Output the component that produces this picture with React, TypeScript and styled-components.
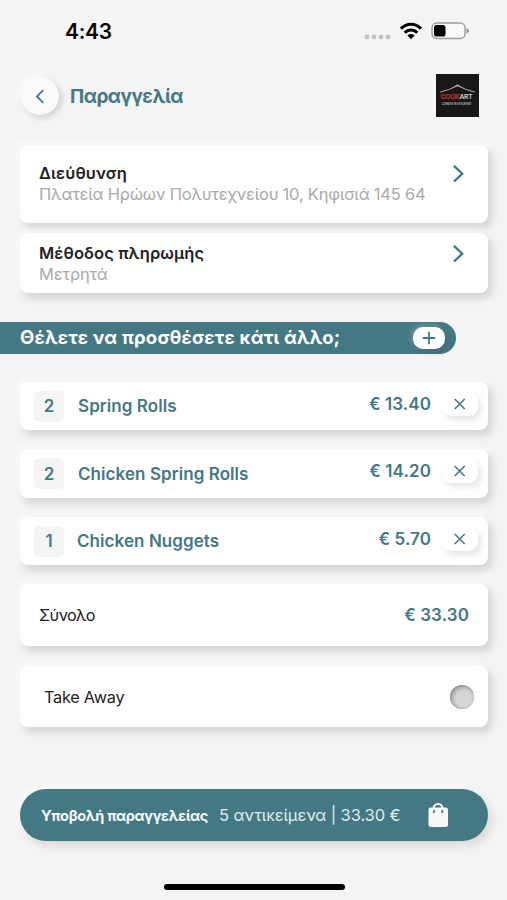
import React from 'react';
import styled, { createGlobalStyle } from 'styled-components';

const TEAL = '#447883';

const GlobalStyle = createGlobalStyle`
  * { box-sizing: border-box; }
  body { margin: 0; background: #f4f4f4; }
  button { border: 0; padding: 0; font: inherit; color: inherit; }
`;

const Screen = styled.div`
  width: 507px;
  height: 900px;
  display: flex;
  flex-direction: column;
  overflow: hidden;
  background: #f4f4f4;
  color: #222;
  font-family: Inter, 'Noto Sans', sans-serif;
  white-space: nowrap;
`;

const StatusBar = styled.div`
  height: 62px;
  display: flex;
  justify-content: space-between;
  align-items: center;
  padding: 0 38px 0 65px;
`;

const Clock = styled.div`
  padding-top: 1px;
  font-size: 21px;
  font-weight: 600;
  letter-spacing: -0.3px;
  color: #050505;
`;

const StatusIcons = styled.div`
  display: flex;
  align-items: center;
  gap: 9px;
`;

const Header = styled.header`
  height: 68px;
  margin-bottom: 15px;
  flex: none;
  display: flex;
  align-items: center;
  padding: 0 28px 0 21px;
`;

const BackButton = styled.button`
  width: 38px;
  height: 38px;
  border-radius: 50%;
  display: grid;
  place-items: center;
  background: #fbfbfb;
  box-shadow: 3px 3px 6px rgba(0, 0, 0, 0.14), -3px -3px 6px rgba(255, 255, 255, 0.7);
`;

const Title = styled.h1`
  margin: 0 auto 0 11px;
  font-size: 19px;
  font-weight: 700;
  letter-spacing: -0.5px;
  color: ${TEAL};
`;

const Card = styled.section<{ $height: number; $gap: number }>`
  width: 468px;
  height: ${p => p.$height}px;
  margin: 0 0 ${p => p.$gap}px 20px;
  flex: none;
  display: flex;
  background: #fff;
  border-radius: 8px;
  box-shadow: 4px 5px 8px rgba(0, 0, 0, 0.14), -3px -3px 7px rgba(255, 255, 255, 0.65);
`;

const LinkCard = styled(Card)<{ $top: number }>`
  justify-content: space-between;
  align-items: flex-start;
  padding: ${p => p.$top}px 23px 0 19px;
`;

const LinkTitle = styled.h2`
  margin: 0;
  font-size: 16.5px;
  line-height: 21px;
  font-weight: 600;
  letter-spacing: 0.1px;
`;

const LinkDetail = styled.p`
  margin: 0;
  font-size: 16.5px;
  line-height: 20px;
  letter-spacing: -0.22px;
  color: #a9a9a9;
`;

const ChevronIcon = styled.svg`
  margin-top: 1.5px;
`;

const Banner = styled.div`
  width: 456px;
  height: 32px;
  margin-bottom: 28.5px;
  flex: none;
  display: flex;
  align-items: center;
  justify-content: space-between;
  padding: 0 11px 0 20px;
  border-radius: 0 16px 16px 0;
  background: ${TEAL};
  color: #fff;
`;

const BannerText = styled.span`
  font-size: 18.5px;
  font-weight: 700;
  letter-spacing: 0.22px;
  padding-bottom: 1px;
`;

const AddButton = styled.button`
  width: 32px;
  height: 22px;
  border-radius: 10px;
  display: grid;
  place-items: center;
  background: #fff;
  box-shadow: 3px 3px 6px rgba(0, 0, 0, 0.12), -2px -2px 6px rgba(255, 255, 255, 0.24);
`;

const ItemCard = styled(Card)`
  align-items: center;
  padding: 0 10px 0 14px;
`;

const Quantity = styled.span`
  width: 30px;
  height: 31px;
  border-radius: 5px;
  display: grid;
  place-items: center;
  background: #f5f5f5;
  color: ${TEAL};
  font-size: 17px;
  font-weight: 600;
`;

const ItemName = styled.span<{ $left: number }>`
  margin-left: ${p => p.$left}px;
  font-size: 17px;
  font-weight: 600;
  letter-spacing: 0.07px;
  color: ${TEAL};
`;

const Price = styled.span`
  margin-left: auto;
  font-size: 17px;
  font-weight: 600;
  letter-spacing: 0.1px;
  color: ${TEAL};
`;

const ItemActions = styled.div`
  margin-left: auto;
  display: flex;
  align-items: center;
  gap: 11px;
  padding-bottom: 5px;
`;

const RemoveButton = styled.button`
  width: 36px;
  height: 24px;
  border-radius: 9px;
  display: grid;
  place-items: center;
  background: #fff;
  box-shadow: 3px 4px 6px rgba(0, 0, 0, 0.1);
`;

const SummaryCard = styled(Card)<{ $left: number; $right: number }>`
  align-items: center;
  padding: 0 ${p => p.$right}px 0 ${p => p.$left}px;
`;

const SummaryLabel = styled.span<{ $spacing: number }>`
  font-size: 16.3px;
  letter-spacing: ${p => p.$spacing}px;
`;

const Toggle = styled.button`
  width: 24px;
  height: 24px;
  margin-left: auto;
  border-radius: 50%;
  background: #d5d5d5;
  box-shadow: inset 2px 2px 4px rgba(0, 0, 0, 0.32), inset 0 0 1px rgba(0, 0, 0, 0.35);
`;

const SubmitButton = styled.button`
  width: 468px;
  height: 52px;
  margin-left: 20px;
  flex: none;
  display: flex;
  align-items: center;
  padding: 0 39px 0 21px;
  border-radius: 26px;
  background: ${TEAL};
  color: #f4fbfc;
  box-shadow: 4px 5px 8px rgba(60, 40, 20, 0.13), -3px -3px 7px rgba(255, 255, 255, 0.5);
`;

const SubmitLabel = styled.span`
  font-size: 14.5px;
  font-weight: 700;
  letter-spacing: -0.32px;
`;

const SubmitSummary = styled.span`
  margin: 0 auto 0 11px;
  font-size: 16.5px;
  letter-spacing: -0.12px;
  color: #dfedef;
`;

const HomeIndicator = styled.div`
  width: 181px;
  height: 6px;
  margin: 43px 0 0 164px;
  border-radius: 3px;
  background: #000;
`;

const Chevron = () => (
  <ChevronIcon width="12" height="18" viewBox="0 0 12 18" fill="none" stroke="#397481" strokeWidth="2.2">
    <path d="M1 .9 9.2 8.7 1 16.5" />
  </ChevronIcon>
);

const LogoMark = styled.svg`
  margin-bottom: 1px;
`;

const Logo = () => (
  <LogoMark width="43" height="43" viewBox="0 0 43 43">
    <rect width="43" height="43" fill="#171717" />
    <path d="M4 18.1Q14 16 21.5 10.7 29 16 39 18.1 29 15.8 21.5 11.9 14 15.8 4 18.1Z" fill="#ddd" stroke="#bbb" strokeWidth=".45" />
    <g fontFamily="Inter, sans-serif" fontWeight="600">
      <text x="4.5" y="25" fontSize="6.6" textLength="19" fill="#171717" stroke="#a62d2b" strokeWidth=".65">COOK</text>
      <text x="23.5" y="25" fontSize="6.6" textLength="13" fill="#d6d6d6">ART</text>
      <text x="6" y="31.4" fontSize="2.8" textLength="29.5" fill="#bdbdbd">CHINESE RESTAURANT</text>
    </g>
  </LogoMark>
);

const items = [
  { quantity: 2, name: 'Spring Rolls', price: '€ 13.40', left: 14 },
  { quantity: 2, name: 'Chicken Spring Rolls', price: '€ 14.20', left: 14 },
  { quantity: 1, name: 'Chicken Nuggets', price: '€ 5.70', left: 13 },
];

export default function App() {
  return (
    <>
      <GlobalStyle />
      <Screen>
        <StatusBar>
          <Clock>4:43</Clock>
          <StatusIcons>
            <svg width="27" height="18" viewBox="0 0 27 18" fill="#c2c2c2">
              <circle cx="3" cy="14.9" r="2.4" /><circle cx="10" cy="14.9" r="2.4" />
              <circle cx="17" cy="14.9" r="2.4" /><circle cx="24" cy="14.9" r="2.4" />
            </svg>
            <svg width="22" height="18" viewBox="0 0 22 18" fill="none" stroke="#000" strokeWidth="3">
              <path d="M1 6.6C6.6 .7 15.4.7 21 6.6M4.8 10.7c3.5-3.7 8.9-3.7 12.4 0" />
              <path d="M7.4 13.5c2-2 5.2-2 7.2 0L11 17.2Z" fill="#000" stroke="none" />
            </svg>
            <svg width="38" height="18" viewBox="0 0 38 18">
              <rect x="1" y="1" width="33" height="15.5" rx="4.8" fill="#fafafa" stroke="#9e9e9e" strokeWidth="1.5" />
              <rect x="3" y="3" width="11.5" height="11.5" rx="2.6" fill="#000" />
              <path d="M35.5 6.2Q38 7 38 8.8t-2.5 2.6Z" fill="#8e8e8e" />
            </svg>
          </StatusIcons>
        </StatusBar>

        <Header>
          <BackButton aria-label="Πίσω">
            <svg width="10" height="15" viewBox="0 0 10 15" fill="none" stroke={TEAL} strokeWidth="1.8">
              <path d="M8.2 1.2 2 7.5l6.2 6.3" />
            </svg>
          </BackButton>
          <Title>Παραγγελία</Title>
          <Logo />
        </Header>

        <LinkCard $height={78} $gap={10} $top={18}>
          <div>
            <LinkTitle>Διεύθυνση</LinkTitle>
            <LinkDetail>Πλατεία Ηρώων Πολυτεχνείου 10, Κηφισιά 145 64</LinkDetail>
          </div>
          <Chevron />
        </LinkCard>
        <LinkCard $height={60} $gap={28.5} $top={10}>
          <div>
            <LinkTitle>Μέθοδος πληρωμής</LinkTitle>
            <LinkDetail>Μετρητά</LinkDetail>
          </div>
          <Chevron />
        </LinkCard>

        <Banner>
          <BannerText>Θέλετε να προσθέσετε κάτι άλλο;</BannerText>
          <AddButton aria-label="Προσθήκη">
            <svg width="14" height="14" viewBox="0 0 14 14" stroke={TEAL} strokeWidth="1.8">
              <path d="M7 .8v12.4M.8 7h12.4" />
            </svg>
          </AddButton>
        </Banner>

        {items.map(item => (
          <ItemCard key={item.name} $height={48.3} $gap={19.2}>
            <Quantity>{item.quantity}</Quantity>
            <ItemName $left={item.left}>{item.name}</ItemName>
            <ItemActions>
              <Price>{item.price}</Price>
              <RemoveButton aria-label="Αφαίρεση">
                <svg width="12" height="12" viewBox="0 0 12 12" stroke={TEAL} strokeWidth="1.6">
                  <path d="m.7 1 10 10M10.7 1l-10 10" />
                </svg>
              </RemoveButton>
            </ItemActions>
          </ItemCard>
        ))}

        <SummaryCard $height={62} $gap={20} $left={19} $right={19}>
          <SummaryLabel $spacing={-0.7}>Σύνολο</SummaryLabel>
          <Price>€ 33.30</Price>
        </SummaryCard>
        <SummaryCard $height={61} $gap={62} $left={24} $right={14}>
          <SummaryLabel $spacing={-0.25}>Take Away</SummaryLabel>
          <Toggle aria-label="Take Away" />
        </SummaryCard>

        <SubmitButton>
          <SubmitLabel>Υποβολή παραγγελείας</SubmitLabel>
          <SubmitSummary>5 αντικείμενα | 33.30 €</SubmitSummary>
          <svg width="22" height="26" viewBox="0 0 22 26">
            <path d="M6.5 8V6.5a4.5 4.5 0 0 1 9 0V8" fill="none" stroke="#f8f8f8" strokeWidth="2" />
            <rect x="1.5" y="5.5" width="19.5" height="19.5" rx="2.2" fill="#f8f8f8" />
            <path d="M7 8v3M15.3 8v3" stroke={TEAL} strokeWidth="1.8" />
          </svg>
        </SubmitButton>
        <HomeIndicator />
      </Screen>
    </>
  );
}
